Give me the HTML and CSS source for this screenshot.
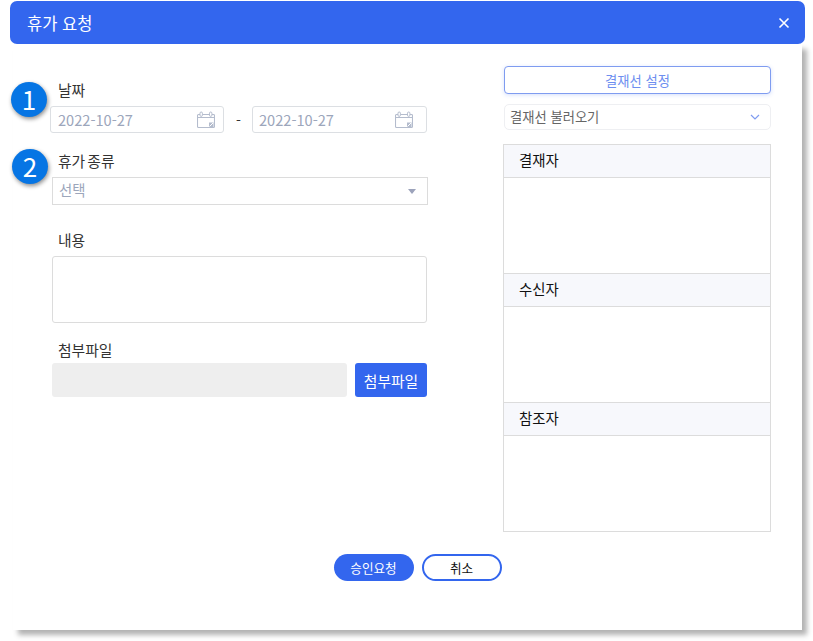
FILE: index.html
```html
<!DOCTYPE html>
<html lang="ko">
<head>
<meta charset="utf-8">
<title>휴가 요청</title>
<link rel="stylesheet" href="styles.css">
</head>
<body>
<div class="modal">
  <header class="modal-head">
    <h1 class="modal-title">휴가 요청</h1>
    <svg class="close" width="12" height="12" viewBox="0 0 12 12"><path d="M1.5 1.5l9 9M10.5 1.5l-9 9" stroke="#fff" stroke-width="1.6" fill="none"/></svg>
  </header>
  <div class="panel">
    <span class="badge badge-one">1</span>
    <span class="badge badge-two">2</span>
    <div class="columns">
      <section class="left">
        <div class="label label-date">날짜</div>
        <div class="date-row">
          <div class="date-input"><span>2022-10-27</span>
            <svg class="cal" width="18" height="18" viewBox="0 0 18 18"><path d="M3 3.5H1.5a1 1 0 0 0-1 1v11a1 1 0 0 0 1 1h15a1 1 0 0 0 1-1v-11a1 1 0 0 0-1-1H15M6 3.5h6M.5 6.5h17" fill="none" stroke="#b4bccd" stroke-width="1.1"/><rect x="3" y="1" width="2.4" height="4.4" rx="1.2" fill="#fff" stroke="#b4bccd"/><rect x="12.5" y="1" width="2.4" height="4.4" rx="1.2" fill="#fff" stroke="#b4bccd"/><rect x="12" y="11.5" width="4.5" height="4.5" fill="#b4bccd"/><path d="M12.5 15.5l3.5-3.5" stroke="#fff"/></svg>
          </div>
          <span class="dash">-</span>
          <div class="date-input date-second"><span>2022-10-27</span>
            <svg class="cal" width="18" height="18" viewBox="0 0 18 18"><path d="M3 3.5H1.5a1 1 0 0 0-1 1v11a1 1 0 0 0 1 1h15a1 1 0 0 0 1-1v-11a1 1 0 0 0-1-1H15M6 3.5h6M.5 6.5h17" fill="none" stroke="#b4bccd" stroke-width="1.1"/><rect x="3" y="1" width="2.4" height="4.4" rx="1.2" fill="#fff" stroke="#b4bccd"/><rect x="12.5" y="1" width="2.4" height="4.4" rx="1.2" fill="#fff" stroke="#b4bccd"/><rect x="12" y="11.5" width="4.5" height="4.5" fill="#b4bccd"/><path d="M12.5 15.5l3.5-3.5" stroke="#fff"/></svg>
          </div>
        </div>
        <div class="label label-type">휴가 종류</div>
        <div class="type-select"><span>선택</span><i class="caret"></i></div>
        <div class="label label-body">내용</div>
        <div class="textarea"></div>
        <div class="label label-file">첨부파일</div>
        <div class="file-row">
          <div class="file-name"></div>
          <button class="file-btn" type="button">첨부파일</button>
        </div>
      </section>
      <aside class="right">
        <button class="line-btn" type="button">결재선 설정</button>
        <div class="line-select"><span>결재선 불러오기</span>
          <svg width="10" height="6" viewBox="0 0 10 6"><path d="M1 1l4 4 4-4" fill="none" stroke="#7f9cf0" stroke-width="1.2"/></svg>
        </div>
        <div class="people">
          <div class="people-head">결재자</div>
          <div class="people-body"></div>
          <div class="people-head">수신자</div>
          <div class="people-body"></div>
          <div class="people-head">참조자</div>
          <div class="people-body last"></div>
        </div>
      </aside>
    </div>
    <footer class="actions">
      <button class="btn-primary" type="button">승인요청</button>
      <button class="btn-outline" type="button">취소</button>
    </footer>
  </div>
</div>
</body>
</html>
```
FILE: styles.css
```css
* { box-sizing: border-box; }
html, body { margin: 0; padding: 0; background: #fff; }
body {
  width: 813px;
  height: 641px;
  overflow: hidden;
  font-family: "Noto Sans CJK KR", "Noto Sans", sans-serif;
  color: #333;
}
button { font-family: inherit; cursor: pointer; padding: 0; }
.modal { width: 795px; margin: 1px 0 0 10px; }
.modal-head {
  position: relative;
  z-index: 1;
  height: 43px;
  background: #3366ee;
  border-radius: 7px;
  display: flex;
  align-items: center;
  justify-content: space-between;
  padding: 0 15px 0 17px;
}
.modal-title { margin: 0; font-size: 16.5px; font-weight: 400; color: #fff; }
.panel {
  position: relative;
  width: 789px;
  height: 586px;
  margin-left: 3px;
  background: #fff;
  box-shadow: 5px 5px 5px rgba(0, 0, 0, .3);
}
.badge {
  position: absolute;
  display: flex;
  align-items: center;
  justify-content: center;
  width: 36px;
  height: 35px;
  padding-bottom: 2px;
  border-radius: 50%;
  background: #0675e4;
  color: #fff;
  font-size: 26px;
  line-height: 1;
  box-shadow: 1px 2px 4px rgba(0, 0, 0, .45);
}
.badge-one { left: -2px; top: 38px; }
.badge-two { left: -1px; top: 105px; }
.columns { display: flex; padding: 22px 31px 0 39px; justify-content: space-between; height: 510px; }
.left { width: 376px; }
.right { width: 268px; }
.label { font-size: 14.8px; line-height: 20px; padding-left: 6px; color: #333; }
.label-date { margin-top: 14px; height: 26px; }
.date-row { display: flex; align-items: center; margin-left: -2px; }
.date-input {
  display: flex;
  align-items: center;
  justify-content: space-between;
  width: 174px;
  height: 27px;
  border: 1px solid #dcdfe3;
  border-radius: 3px;
  padding: 0 8px 0 7px;
  font-size: 14.6px;
  color: #9ca6bb;
}
.date-second { width: 175px; padding-left: 6px; padding-right: 13px; }
.dash { width: 28px; padding-left: 1px; text-align: center; font-size: 14px; color: #333; }
.label-type { margin-top: 18px; height: 26px; word-spacing: -2px; }
.type-select {
  display: flex;
  align-items: center;
  justify-content: space-between;
  width: 376px;
  height: 28px;
  border: 1px solid #dcdcdc;
  padding: 0 11px 4px 6px;
  font-size: 14.4px;
  color: #9ca6bb;
}
.caret {
  border-left: 4px solid transparent;
  border-right: 4px solid transparent;
  border-top: 5px solid #9ca3bb;
  margin-top: 5px;
}
.label-body { margin-top: 25px; height: 26px; }
.textarea { width: 375px; height: 67px; border: 1px solid #dcdcdc; border-radius: 3px; }
.label-file { margin-top: 17px; height: 23px; }
.file-row { display: flex; gap: 8px; width: 375px; }
.file-name { width: 295px; height: 34px; background: #eeeeee; border-radius: 3px; }
.file-btn {
  width: 72px;
  height: 34px;
  border: 0;
  border-radius: 3px;
  background: #3366ee;
  color: #fff;
  font-size: 14.8px;
}
.line-btn {
  display: block;
  width: 267px;
  height: 28px;
  margin-left: 1px;
  border: 1px solid #7f9cf0;
  border-radius: 4px;
  background: #fff;
  color: #6e8ff0;
  font-size: 13.3px;
  box-shadow: 0 1px 4px rgba(51, 102, 238, .2);
}
.line-select {
  display: flex;
  align-items: center;
  justify-content: space-between;
  width: 267px;
  height: 26px;
  margin: 10px 0 14px 1px;
  border: 1px solid #eeeff2;
  border-radius: 5px;
  padding: 0 10px 2px 5px;
  font-size: 13.3px;
  color: #666;
}
.line-select svg { margin-top: 2px; }
.people { border: 1px solid #dcdcdc; border-top: 0; width: 268px; }
.people-head {
  height: 34px;
  border-top: 1px solid #dcdcdc;
  border-bottom: 1px solid #dcdcdc;
  background: #f7f8fc;
  padding-left: 15px;
  font-size: 14.4px;
  line-height: 29px;
  color: #111;
}
.people-body { height: 95px; }
.people-body.last { height: 95px; }
.actions { display: flex; justify-content: center; gap: 8px; padding-left: 20px; }
.btn-primary, .btn-outline {
  width: 80px;
  height: 27px;
  border-radius: 14px;
  font-size: 12.6px;
}
.btn-primary { border: 0; background: #3366ee; color: #fff; }
.btn-outline { border: 2px solid #3366ee; background: #fff; color: #111; }
```
